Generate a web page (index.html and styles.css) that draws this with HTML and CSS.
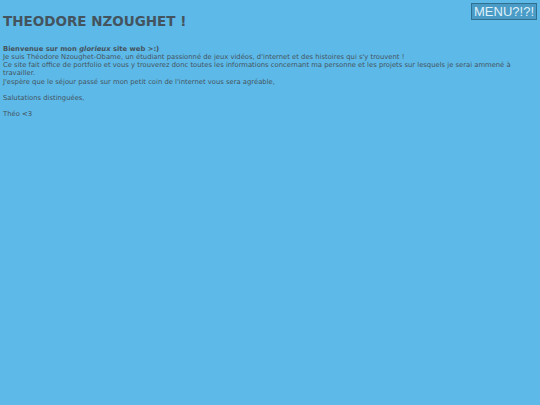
FILE: index.html
```html
<!DOCTYPE html>
<html lang="fr">
<head>
<meta charset="utf-8">
<title>Theodore Nzoughet</title>
<link rel="stylesheet" href="styles.css">
</head>
<body>
<header class="top">
  <h1 class="title">THEODORE NZOUGHET !</h1>
  <button class="menu">MENU?!?!</button>
</header>
<main class="content">
  <p class="text"><b>Bienvenue sur mon <i>glorieux</i> site web &gt;:)</b><br>
  Je suis Théodore Nzoughet-Obame, un étudiant passionné de jeux vidéos, d'internet et des histoires qui s'y trouvent !<br>
  Ce site fait office de portfolio et vous y trouverez donc toutes les informations concernant ma personne et les projets sur lesquels je serai ammené à travailler.<br>
  J'espère que le séjour passé sur mon petit coin de l'internet vous sera agréable,<br>
  <br>
  Salutations distinguées,<br>
  <br>
  Théo &lt;3</p>
</main>
</body>
</html>
```

FILE: styles.css
```css
html, body {
  margin: 0;
  padding: 0;
  background: #5db9e8;
  height: 100%;
}
body {
  font-family: "DejaVu Sans", Verdana, sans-serif;
  color: #44545e;
}
.top {
  display: flex;
  justify-content: space-between;
  align-items: flex-start;
  padding: 3px 3px 0 3px;
}
.title {
  margin: 10px 0 0 0;
  font-size: 13.5px;
  line-height: 16px;
  font-weight: bold;
  color: #44545e;
}
.menu {
  font-family: "Liberation Sans", Arial, sans-serif;
  font-size: 13px;
  line-height: 15px;
  padding: 0 2px;
  background: #4a9bc6;
  color: #dff1fa;
  border: 1px solid #2f6f90;
  border-radius: 0;
}
.content {
  padding: 0 3px;
}
.text {
  margin: 16px 0 0 0;
  font-size: 6.8px;
  line-height: 8.15px;
}
```
